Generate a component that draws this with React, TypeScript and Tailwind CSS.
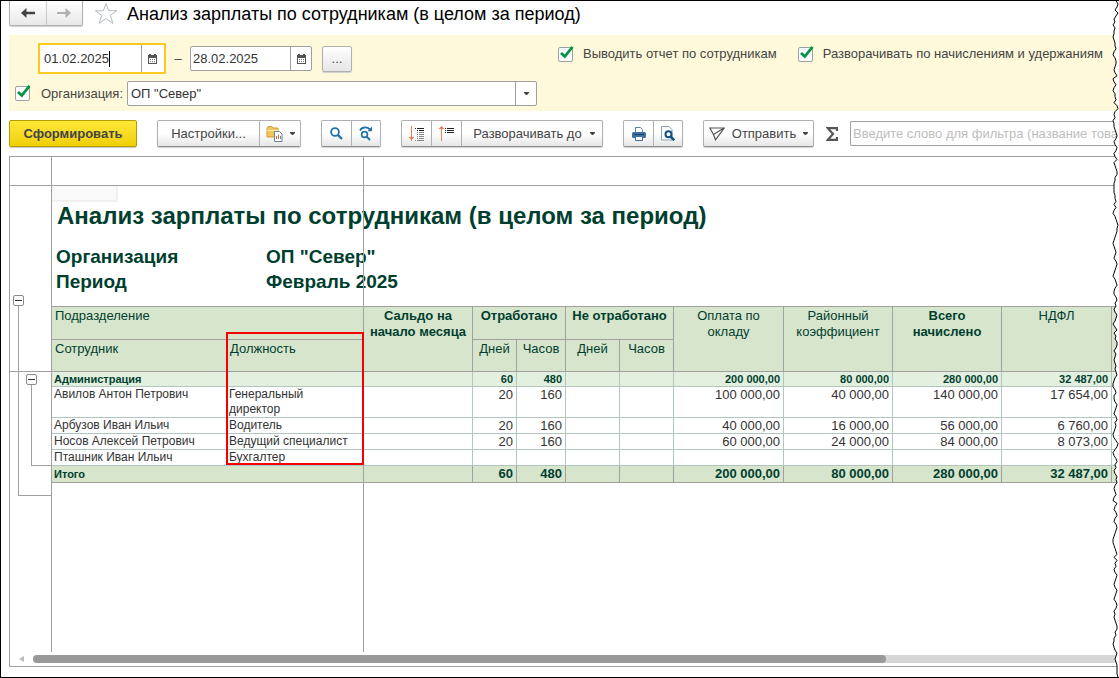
import React from 'react';

type Row = {
  name: string;
  post: string;
  days?: string;
  hours?: string;
  pay?: string;
  district?: string;
  total?: string;
  tax?: string;
};

const rows: Row[] = [
  { name: 'Авилов Антон Петрович', post: 'Генеральный директор', days: '20', hours: '160', pay: '100 000,00', district: '40 000,00', total: '140 000,00', tax: '17 654,00' },
  { name: 'Арбузов Иван Ильич', post: 'Водитель', days: '20', hours: '160', pay: '40 000,00', district: '16 000,00', total: '56 000,00', tax: '6 760,00' },
  { name: 'Носов Алексей Петрович', post: 'Ведущий специалист', days: '20', hours: '160', pay: '60 000,00', district: '24 000,00', total: '84 000,00', tax: '8 073,00' },
  { name: 'Пташник Иван Ильич', post: 'Бухгалтер' },
];

const group = 'flex h-[27px] shrink-0 divide-x divide-[#b0b0b0] rounded-xs border border-[#b0b0b0] border-b-[#8f8f8f] bg-linear-to-b from-white from-50% to-[#e6e6e6] shadow-[0_1px_1px_#d0d0d0]';
const iconBtn = 'flex w-[30px] items-center justify-center';

const Arrow: React.FC = () => (
  <svg width="5" height="3" viewBox="0 0 5 3" className="shrink-0"><path d="M0 0h5v1L3 3H2L0 1z" fill="#444" /></svg>
);

const Calendar: React.FC = () => (
  <svg width="9" height="10" viewBox="0 0 9 10" shapeRendering="crispEdges">
    <path d="M0 1h1V0h2v1h3V0h2v1h1v9H0z" fill="#555" />
    <path d="M1 4h7v5H1z" fill="#fff" />
    <path d="M2 5h1v1H2zM4 5h1v1H4zM6 5h1v1H6zM2 7h1v1H2zM4 7h1v1H4zM6 7h1v1H6z" fill="#777" />
  </svg>
);

const Check: React.FC<{ id: string }> = ({ id }) => (
  <span className="relative flex size-[15px] shrink-0">
    <input id={id} type="checkbox" defaultChecked className="size-[15px] appearance-none rounded-xs border border-[#a0a0a0] bg-white" />
    <svg width="16" height="15" viewBox="0 0 16 15" className="pointer-events-none absolute -top-[2px] left-0">
      <path d="M3 8L6.800 11.500L14.500 1.800" fill="none" stroke="#009646" strokeWidth="2.800" />
    </svg>
  </span>
);

const Toggle: React.FC = () => (
  <button aria-label="Свернуть группу" className="flex size-[11px] items-center justify-center rounded-xs border border-[#8c8c8c] bg-white">
    <span className="h-px w-[7px] bg-[#333]" />
  </button>
);

const TitleBar: React.FC = () => (
  <header className="flex h-[34px] items-start">
    <div className="flex h-[25px] w-[74px] divide-x divide-[#c8c8c8] rounded-b-xs border border-t-0 border-[#b0b0b0] bg-linear-to-b from-white to-[#e8e8e8] shadow-[0_1px_1px_#d0d0d0]">
      <button aria-label="Назад" className="flex flex-1 items-center justify-center">
        <svg width="14" height="10" viewBox="0 0 14 10"><path d="M0 5L5.500 0v3.800H14v2.400H5.500V10z" fill="#444" /></svg>
      </button>
      <button aria-label="Вперед" className="flex flex-1 items-center justify-center">
        <svg width="14" height="10" viewBox="0 0 14 10"><path d="M14 5L8.500 0v4H0v2h8.500v4z" fill="#b0b0b0" /></svg>
      </button>
    </div>
    <button aria-label="Избранное" className="ml-[11px] mt-px">
      <svg width="24" height="23" viewBox="0 0 24 23"><path d="M12 1.500l2.700 7.200h8l-6.400 4.700 2.600 8L12 16.500l-6.900 4.900 2.600-8L1.300 8.700h8z" fill="#fff" stroke="#b4bac3" /></svg>
    </button>
    <h1 className="ml-[9px] text-[18px] leading-[26px] whitespace-nowrap text-black">Анализ зарплаты по сотрудникам (в целом за период)</h1>
  </header>
);

const Filters: React.FC = () => (
  <section className="h-[76px] bg-[#fff9db] pt-2">
    <div className="flex">
      <div className="flex w-[549px] shrink-0 items-center pl-[29px]">
        <div className="relative flex h-[31px] w-[128px] border-2 border-[#fcc920] bg-white">
          <input aria-label="Начало периода" defaultValue="01.02.2025" className="w-[102px] border-r border-[#a0a0a0] bg-white pl-1 text-[#333] outline-none" />
          <span className="absolute top-[6px] left-[69px] h-4 w-px bg-black" />
          <button aria-label="Выбрать начало" className="flex w-5 items-center justify-center"><Calendar /></button>
        </div>
        <span className="w-6 text-center">–</span>
        <div className="flex h-[25px] w-[122px] rounded-xs border border-[#a0a0a0] bg-white">
          <input aria-label="Конец периода" defaultValue="28.02.2025" className="w-[100px] border-r border-[#a0a0a0] pl-[2px] text-[#333] outline-none" />
          <button aria-label="Выбрать конец" className="flex w-5 items-center justify-center"><Calendar /></button>
        </div>
        <button className="ml-[10px] h-[26px] w-[30px] rounded-xs border border-[#b0b0b0] bg-linear-to-b from-white to-[#e6e6e6] shadow-[0_1px_1px_#d0d0d0]">...</button>
      </div>
      <div className="flex items-start gap-[21px] pt-[3px] whitespace-nowrap">
        <div className="flex items-center gap-[10px]">
          <Check id="by-employee" />
          <label htmlFor="by-employee">Выводить отчет по сотрудникам</label>
        </div>
        <div className="flex items-center gap-[10px]">
          <Check id="by-accrual" />
          <label htmlFor="by-accrual">Разворачивать по начислениям и удержаниям</label>
        </div>
      </div>
    </div>
    <div className="mt-[7px] flex items-center pl-[6px]">
      <Check id="org-on" />
      <label htmlFor="org" className="ml-[11px] w-[86px]">Организация:</label>
      <div className="relative flex h-[25px] w-[410px]">
        <select id="org" className="w-full appearance-none rounded-xs border border-[#a0a0a0] bg-white pl-[3px] text-[#333]">
          <option>ОП "Север"</option>
        </select>
        <span className="pointer-events-none absolute inset-y-0 right-0 flex w-[22px] items-center justify-center border-l border-[#a0a0a0]"><Arrow /></span>
      </div>
    </div>
  </section>
);

const Toolbar: React.FC = () => (
  <div className="mt-[9px] flex items-center gap-5">
    <button className="h-[27px] w-[128px] shrink-0 rounded-xs border border-[#b39b00] bg-linear-to-b from-[#ffe838] to-[#f0cf00] font-bold text-[#444] shadow-[0_1px_1px_#c8c8c8]">Сформировать</button>

    <div className={group}>
      <button className="w-[102px]">Настройки...</button>
      <button aria-label="Варианты отчета" className="flex w-10 items-center justify-center gap-[7px]">
        <svg width="17" height="17" viewBox="0 0 17 17">
          <path d="M1 3.500l1-2h4l1 1.500h5v9H1z" fill="#f3c55c" stroke="#d29a32" />
          <path d="M1 5.500h11" stroke="#fff0b8" />
          <path d="M8.500 6.500h5l2.500 2.500v7.500H8.500z" fill="#fff" stroke="#6b8299" />
          <path d="M10.500 14v-3M12.500 14v-4.500" stroke="#e05a4a" /><path d="M14.500 14v-3" stroke="#43a85a" />
        </svg>
        <Arrow />
      </button>
    </div>

    <div className={group}>
      <button aria-label="Найти" className={iconBtn}>
        <svg width="13" height="13" viewBox="0 0 13 13" fill="none" stroke="#2373a8"><circle cx="5" cy="5" r="3.900" strokeWidth="1.800" /><path d="M7.800 7.800L12 12" strokeWidth="2.400" /></svg>
      </button>
      <button aria-label="Найти далее" className="flex w-7 items-center justify-center">
        <svg width="14" height="15" viewBox="0 0 14 15" fill="none" stroke="#2373a8">
          <path d="M1 4.500C3 .8 8 .5 11 3.500" strokeWidth="1.800" /><path d="M13 .5v4.800H8.500z" fill="#2373a8" stroke="none" />
          <circle cx="5.500" cy="8.500" r="2.900" strokeWidth="1.700" /><path d="M7.500 10.500L11 14" strokeWidth="2" />
        </svg>
      </button>
    </div>

    <div className={group}>
      <button aria-label="Развернуть" className={iconBtn}>
        <svg width="16" height="16" viewBox="0 0 16 16" shapeRendering="crispEdges">
          <path d="M2 0h1v11h2v1H4v1H3v2H2v-2H1v-1H0v-1h2z" fill="#f08050" />
          <path d="M6 2h1v1H6zM8 2h7v1H8zM8 4h1v1H8zM10 4h5v1h-5z" fill="#222" />
          <path d="M8 6h1v1H8zM10 6h5v1h-5zM8 8h1v1H8zM10 8h5v1h-5zM8 10h1v1H8zM10 10h5v1h-5zM8 12h1v1H8zM10 12h5v1h-5zM6 14h1v1H6zM8 14h7v1H8z" fill="#888" />
        </svg>
      </button>
      <button aria-label="Свернуть" className={iconBtn}>
        <svg width="16" height="16" viewBox="0 0 16 16" shapeRendering="crispEdges">
          <path d="M2 0h1v1h1v1h1v1H3v12H2V3H0V2h1V1h1z" fill="#f08050" />
          <path d="M6 2h1v1H6zM8 2h7v1H8zM6 4h1v1H6zM8 4h7v1H8zM6 6h1v1H6zM8 6h7v1H8z" fill="#222" />
        </svg>
      </button>
      <button className="flex w-[140px] items-center justify-center gap-2 pl-1">Разворачивать до <Arrow /></button>
    </div>

    <div className={group}>
      <button aria-label="Печать" className={iconBtn}>
        <svg width="14" height="14" viewBox="0 0 14 14">
          <path d="M3.500 6V.5h5L10.500 2.500V6" fill="#fff" stroke="#5a7fa5" />
          <rect y="5" width="14" height="6" rx="1.500" fill="#3f6f9f" /><path d="M2 7.500h10" stroke="#16456e" />
          <path d="M3.500 9.500h7v4h-7z" fill="#fff" stroke="#3f6f9f" />
        </svg>
      </button>
      <button aria-label="Просмотр" className="flex w-7 items-center justify-center">
        <svg width="14" height="15" viewBox="0 0 14 15">
          <path d="M.5.500h7.500l3 3V14H.5z" fill="#fff" stroke="#8aa0b5" />
          <circle cx="7.500" cy="8.300" r="3" fill="#fff" stroke="#125080" strokeWidth="2" /><path d="M9.500 10.500l3.700 3.700" stroke="#125080" strokeWidth="2.500" />
        </svg>
      </button>
    </div>

    <div className="flex shrink-0 items-center">
      <div className={group}>
        <button className="flex w-[109px] items-center justify-center gap-[7px]">
          <svg width="16" height="14" viewBox="0 0 16 14" fill="none" stroke="#555" strokeWidth="1.200"><path d="M.8 1h14.400L6.500 12.800 4.500 7.500zM4.500 7.500L15 1M.8 1l3.700 6.500" /></svg>
          Отправить <Arrow />
        </button>
      </div>
      <button aria-label="Сумма" className="ml-3">
        <svg width="12" height="14" viewBox="0 0 12 14"><path d="M11 4V1.200H1.800L7 7l-5.200 5.800H11V10" fill="none" stroke="#555" strokeWidth="2.200" /></svg>
      </button>
    </div>

    <input aria-label="Фильтр" placeholder="Введите слово для фильтра (название товара)" className="-ml-2 h-[25px] min-w-0 flex-1 rounded-l-xs border border-r-0 border-[#a0a0a0] bg-white pl-[2px] placeholder:text-[#bdbdbd]" />
  </div>
);

const head = 'border-r border-b border-[#a0a0a0] bg-[#d8e5cd] px-[3px] pt-px align-top font-normal leading-4';
const sub = 'border-r border-b border-[#b0c6be] bg-[#e4f0df] pl-1 pr-[3px]';
const cell = 'border-r border-b border-[#b0c6be] pr-[3px] pl-[2px] align-top';
const label = 'border-r border-b border-[#b0c6be] pl-[2px] text-left align-top text-xs leading-[15px]';
const sum = 'border-r border-b border-[#a0a0a0] bg-[#d8e5cd] pl-1 pr-[3px]';

const Report: React.FC = () => (
  <table className="w-full table-fixed border-separate border-spacing-0 border-t border-[#a0a0a0] text-[#003f2f]">
    <colgroup>
      <col className="w-[175px]" />
      <col className="w-[137px]" />
      <col className="w-[109px]" />
      <col className="w-[44px]" />
      <col className="w-[49px]" />
      <col className="w-[54px]" />
      <col className="w-[54px]" />
      <col className="w-[110px]" />
      <col className="w-[109px]" />
      <col className="w-[109px]" />
      <col className="w-[110px]" />
      <col />
    </colgroup>
    <thead>
      <tr className="h-[33px]">
        <th colSpan={2} className={`${head} text-left`}>Подразделение</th>
        <th rowSpan={2} className={head}><b>Сальдо на начало месяца</b></th>
        <th colSpan={2} className={head}><b>Отработано</b></th>
        <th colSpan={2} className={head}><b>Не отработано</b></th>
        <th rowSpan={2} className={head}>Оплата по<br />окладу</th>
        <th rowSpan={2} className={head}>Районный коэффициент</th>
        <th rowSpan={2} className={head}><b>Всего<br />начислено</b></th>
        <th rowSpan={2} className={head}>НДФЛ</th>
        <th rowSpan={2} className={head} />
      </tr>
      <tr className="h-8">
        <th className={`${head} text-left`}>Сотрудник</th>
        <th className={`${head} text-left`}>Должность</th>
        <th className={head}>Дней</th>
        <th className={head}>Часов</th>
        <th className={head}>Дней</th>
        <th className={head}>Часов</th>
      </tr>
    </thead>
    <tbody className="text-right">
      <tr className="h-[15px] text-[11px] leading-[14px] font-bold">
        <td colSpan={2} className="border-r border-b border-[#b0c6be] bg-[#e4f0df] pl-[2px] text-left">Администрация</td>
        <td className={sub} />
        <td className={sub}>60</td>
        <td className={sub}>480</td>
        <td className={sub} />
        <td className={sub} />
        <td className={sub}>200 000,00</td>
        <td className={sub}>80 000,00</td>
        <td className={sub}>280 000,00</td>
        <td className={sub}>32 487,00</td>
        <td className={sub} />
      </tr>
      {rows.map((r) => (
        <tr key={r.name} className="h-4 leading-[15px] text-[#333]">
          <td className={label}>{r.name}</td>
          <td className={`${label} pr-3`}>{r.post}</td>
          <td className={cell} />
          <td className={cell}>{r.days}</td>
          <td className={cell}>{r.hours}</td>
          <td className={cell} />
          <td className={cell} />
          <td className={cell}>{r.pay}</td>
          <td className={cell}>{r.district}</td>
          <td className={cell}>{r.total}</td>
          <td className={cell}>{r.tax}</td>
          <td className={cell} />
        </tr>
      ))}
      <tr className="h-[17px] leading-4 font-bold">
        <td colSpan={2} className="border-r border-b border-[#a0a0a0] bg-[#d8e5cd] pl-[2px] text-left text-[11px] leading-4">Итого</td>
        <td className={sum} />
        <td className={sum}>60</td>
        <td className={sum}>480</td>
        <td className={sum} />
        <td className={sum} />
        <td className={sum}>200 000,00</td>
        <td className={sum}>80 000,00</td>
        <td className={sum}>280 000,00</td>
        <td className={sum}>32 487,00</td>
        <td className={sum} />
      </tr>
    </tbody>
  </table>
);

const Sheet: React.FC = () => (
  <main className="mt-[9px] mb-[10px] flex flex-1 flex-col border-y border-l border-[#a0a0a0]">
    <div className="flex h-[29px] shrink-0 border-b border-[#a0a0a0]">
      <div className="w-[42px] border-r border-[#a0a0a0]" />
      <div className="w-[312px] border-r border-[#a0a0a0]" />
    </div>

    <div className="relative flex flex-1">
      {/* дерево группировок */}
      <div className="w-[42px] shrink-0 border-r border-[#a0a0a0] pt-[109px] pl-[3px]">
        <Toggle />
        <div className="ml-[5px] h-[190px] border-b border-l border-[#a0a0a0]">
          <div className="-ml-[9px] h-[66px] border-b border-[#a0a0a0]" />
          <div className="pt-[2px] pl-[7px]">
            <Toggle />
            <div className="ml-[5px] h-[81px] border-b border-l border-[#a0a0a0]" />
          </div>
        </div>
      </div>

      <div className="min-w-0 flex-1">
        <div className="h-4 w-[66px] border-r-2 border-b-2 border-[#f0f0f0] bg-[#f9f9f9]" />
        <h2 className="pl-[5px] text-[24px] leading-[27px] font-bold whitespace-nowrap text-[#003f2f]">Анализ зарплаты по сотрудникам (в целом за период)</h2>
        <dl className="mt-[15px] mb-3 grid grid-cols-[210px_1fr] pl-1 text-[19px] leading-[25px] font-bold text-[#003f2f]">
          <dt>Организация</dt>
          <dd>ОП "Север"</dd>
          <dt>Период</dt>
          <dd>Февраль 2025</dd>
        </dl>
        <div className="relative">
          <Report />
          <div className="pointer-events-none absolute top-[26px] left-[174px] z-10 h-[133px] w-[138px] border-2 border-[#f40000]" />
        </div>
      </div>
      <div className="pointer-events-none absolute inset-y-0 left-[353px] w-px bg-[#a0a0a0]" />
    </div>

    <div className="mt-[3px] mb-[3px] flex h-2 items-center pl-[9px]">
      <svg width="5" height="6" viewBox="0 0 5 6"><path d="M5 0v6L0 3z" fill="#bbb" /></svg>
      <div className="ml-[9px] h-2 flex-1 rounded-l-full bg-[#d6d6d6]">
        <div className="h-2 w-[853px] rounded-full bg-[#999]" />
      </div>
    </div>
  </main>
);

// рваный правый край: смещение линии через каждые 3px
const tear =
  '4653642313221233421344323512421334256323122345423542352345533222233424' +
  '2134565543212343245432134532245342354313524355424323434532113422354324' +
  '5343212465312453423545323421532453245432112345253423543235432454232345' +
  '534221235434555565';
const edge = 'M4 0' + tear.split('').map((x, i) => `L${x} ${i * 3}`).join('') + 'L6 678';

const App: React.FC = () => {
  return (
    <div className="relative flex min-h-screen flex-col overflow-hidden border-y border-l border-black bg-white pl-2 font-['Liberation_Sans',Arial,sans-serif] text-[13px] leading-4 text-[#444]">
      <TitleBar />
      <Filters />
      <Toolbar />
      <Sheet />
      <svg className="pointer-events-none absolute inset-y-0 right-0 h-full w-[7px]" viewBox="0 0 7 678" preserveAspectRatio="none" shapeRendering="crispEdges">
        <path d={`${edge}H8V0z`} fill="#fff" />
        <path d={edge} fill="none" stroke="#000" />
      </svg>
    </div>
  );
};

export default App;
